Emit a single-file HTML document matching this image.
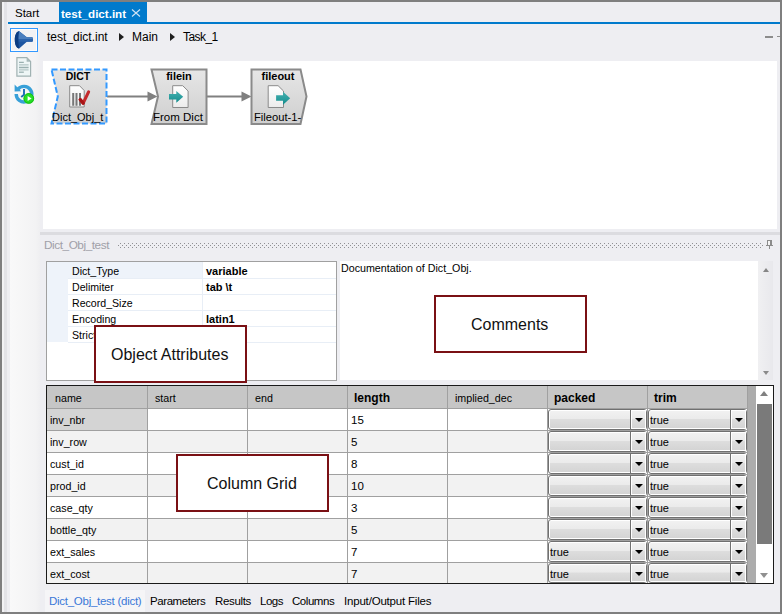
<!DOCTYPE html>
<html><head><meta charset="utf-8">
<style>
*{margin:0;padding:0;box-sizing:border-box}
html,body{width:782px;height:614px;overflow:hidden}
body{position:relative;background:#eeeef2;font-family:"Liberation Sans",sans-serif;font-size:12px;color:#000}
.a{position:absolute}
.t{position:absolute;white-space:pre;line-height:1}
.cb{position:absolute;border:1px solid #707070;border-radius:3px;box-shadow:inset 0 0 0 1px #fff;background:linear-gradient(to bottom,#f2f2f2 0%,#ebebeb 45%,#dddddd 50%,#d3d3d3 100%)}
.cbb{position:absolute;top:0;left:81px;bottom:0;width:16px;border-left:1px solid #707070;box-shadow:inset 0 0 0 1px #fff;background:linear-gradient(to bottom,#f2f2f2 0%,#ebebeb 45%,#dddddd 50%,#d3d3d3 100%)}
.tri{position:absolute;left:3.5px;top:8px;width:0;height:0;border-top:4.2px solid #000;border-left:4px solid transparent;border-right:4px solid transparent}
.ann{position:absolute;border:2px solid #7a1014;background:#fff}
.annt{position:absolute;white-space:pre;line-height:1;font-size:16px;color:#111}
</style></head><body>

<div class="a" style="left:0;top:0;width:782px;height:2px;background:#7f7f7f"></div>
<div class="a" style="left:0;top:0;width:2px;height:614px;background:#7f7f7f"></div>
<div class="a" style="left:780px;top:0;width:2px;height:614px;background:#7f7f7f"></div>
<div class="a" style="left:0;top:612px;width:782px;height:2px;background:#7f7f7f"></div>
<div class="a" style="left:2px;top:2px;width:2px;height:610px;background:#f2f2f4"></div>
<div class="a" style="left:4px;top:2px;width:3px;height:610px;background:#e3e3e7"></div>
<div class="t" style="left:15px;top:8px;font-size:11.5px">Start</div>
<div class="a" style="left:59px;top:2px;width:88px;height:22px;background:#007acc"></div>
<div class="t" style="left:61px;top:8px;font-size:11.6px;font-weight:bold;color:#fff">test_dict.int</div>
<svg class="a" style="left:131px;top:9px" width="10" height="8" viewBox="0 0 10 8"><path d="M1 0.5L9 7.5M9 0.5L1 7.5" stroke="#d0e4f5" stroke-width="1.1"/></svg>
<div class="a" style="left:8px;top:22px;width:772px;height:2px;background:#007acc"></div>
<div class="a" style="left:10px;top:24px;width:30px;height:588px;background:linear-gradient(to right,#f9f9f9,#f3f3f4 85%,#efeff1)"></div>
<div class="a" style="left:10px;top:28px;width:28px;height:24px;border:1px solid #3399ff;background:#f2f2f4;box-shadow:inset 0 0 0 1px #fcfcfc"></div>
<svg class="a" style="left:0;top:0" width="43" height="110" viewBox="0 0 43 110">
<defs><clipPath id="fc"><path d="M19.2,31.3 C16.3,31.3 14.8,35.5 14.8,39.8 C14.8,44.3 16.3,48.4 19.2,48.4 L26.8,41.8 L32.4,41.8 Q33.6,39.5 32.4,37.2 L26.8,37.2 Z"/></clipPath></defs>
<g clip-path="url(#fc)"><rect x="14" y="31" width="20" height="18" fill="#1d55a0"/><rect x="18" y="31" width="16" height="8.4" fill="#4a7fbf"/><rect x="18" y="39.4" width="16" height="2.4" fill="#2a62ab"/><path d="M14,31 H19.2 C18.2,35 18.2,45 19.2,49 H14Z" fill="#0b3c82"/></g>
<path d="M16.9,57.7 L26.8,57.7 L30.6,61.5 L30.6,76.1 L16.9,76.1 Z" fill="#eef6f6" stroke="#a0b2b2" stroke-width="1.2"/>
<path d="M26.6,57.8 L26.6,61.7 L30.5,61.7 Z" fill="#a8baba"/>
<g stroke-width="1.3"><path d="M19,62.4H23.8M19,67.5H28.6" stroke="#9ab0b0"/><path d="M19,64.9H28.6M19,69.8H28.6" stroke="#b4c6c6"/><path d="M19,72.2H23.8" stroke="#9ab0b0"/></g>
<path d="M16.2,94 A7.8,7.8 0 1 0 17.8,89.4" fill="none" stroke="#38a0d8" stroke-width="3.4"/>
<path d="M14.6,84.6 L14.6,91.6 L21.2,91.2 Z" fill="#38a0d8"/>
<path d="M24,89 L24,94.8 L21.2,97" fill="none" stroke="#1c6cb8" stroke-width="1.9"/>
<circle cx="28.8" cy="98.4" r="5.3" fill="#26e026"/>
<circle cx="28.8" cy="98.4" r="4.8" fill="none" stroke="#14b014" stroke-width="0.8"/>
<path d="M27.6,95.9 L31.6,98.5 L27.6,101.1 Z" fill="#fff"/>
</svg>
<div class="t" style="left:47px;top:31px;font-size:12px">test_dict.int</div>
<div class="a" style="left:119px;top:33px;width:0;height:0;border-left:5px solid #1e1e1e;border-top:4px solid transparent;border-bottom:4px solid transparent"></div>
<div class="t" style="left:132px;top:31px;font-size:12px">Main</div>
<div class="a" style="left:170px;top:33px;width:0;height:0;border-left:5px solid #1e1e1e;border-top:4px solid transparent;border-bottom:4px solid transparent"></div>
<div class="t" style="left:183px;top:31px;font-size:12px;letter-spacing:-0.55px">Task_1</div>
<div class="a" style="left:765px;top:36px;width:8px;height:2px;background:#8c8c8c"></div>
<div class="a" style="left:777px;top:36px;width:3px;height:1px;background:#8c8c8c"></div>
<div class="a" style="left:43px;top:61px;width:734px;height:168px;background:#fff"></div>
<svg class="a" style="left:0;top:0" width="782" height="230" viewBox="0 0 782 230">
<defs><linearGradient id="ng" x1="0" y1="0" x2="0" y2="1"><stop offset="0" stop-color="#e6e6e6"/><stop offset="1" stop-color="#cfcfcf"/></linearGradient>
<linearGradient id="pg" x1="0" y1="0" x2="0" y2="1"><stop offset="0" stop-color="#ffffff"/><stop offset="1" stop-color="#ececec"/></linearGradient>
<linearGradient id="tg" x1="0" y1="0" x2="0" y2="1"><stop offset="0" stop-color="#45aeae"/><stop offset="0.55" stop-color="#2a9e9e"/><stop offset="1" stop-color="#118a8a"/></linearGradient></defs>
<line x1="107" y1="96.5" x2="149" y2="96.5" stroke="#808080" stroke-width="2"/>
<path d="M147.5,91.5 L157.5,96.5 L147.5,101.5 Z" fill="#808080"/>
<line x1="207" y1="96.5" x2="243" y2="96.5" stroke="#808080" stroke-width="2"/>
<path d="M241.5,91.5 L251.5,96.5 L241.5,101.5 Z" fill="#808080"/>
<path d="M51.5,69.5 L106.5,69.5 L106.5,123.5 L51.5,123.5 L57.8,96.5 Z" fill="url(#ng)" stroke="#3399ff" stroke-width="2" stroke-dasharray="6,2.5"/>
<path d="M151.5,69.5 L206.5,69.5 L206.5,124 L151.5,124 L158,96.5 Z" fill="url(#ng)" stroke="#8a8a8a" stroke-width="2"/>
<path d="M251.5,69.5 L300.5,69.5 L306.5,96.5 L300.5,124 L251.5,124 Z" fill="url(#ng)" stroke="#8a8a8a" stroke-width="2"/>
<!-- dict icon -->
<path d="M69.7,85.7 L79.5,85.7 L84.2,90.5 L84.2,107 L69.7,107 Z" fill="url(#pg)" stroke="#8a8a8a" stroke-width="1"/>
<g stroke="#777" stroke-width="2"><path d="M73.2,93V105.7M76.5,93V105.7M80,93V105.7"/></g>
<path d="M80.2,99.6 L83.2,103.2 L88.6,91.8" fill="none" stroke="#c42a2c" stroke-width="3.1" stroke-linecap="round" stroke-linejoin="round"/><path d="M80.2,99.6 L83.2,103.2" fill="none" stroke="#a81416" stroke-width="3.1" stroke-linecap="round"/>
<!-- filein icon -->
<path d="M172.7,85.7 L182.7,85.7 L188.1,91 L188.1,107.5 L172.7,107.5 Z" fill="url(#pg)" stroke="#8a8a8a" stroke-width="1"/>
<path d="M169,94 L176.3,94 L176.3,91 L183.2,96.8 L176.3,102.7 L176.3,99.5 L169,99.5 Z" fill="url(#tg)"/>
<!-- fileout icon -->
<path d="M268.2,85.7 L278.1,85.7 L283.5,91 L283.5,107.5 L268.2,107.5 Z" fill="url(#pg)" stroke="#8a8a8a" stroke-width="1"/>
<path d="M276.1,95.3 L283,95.3 L283,91.8 L290.2,98.2 L283,104.8 L283,100.7 L276.1,100.7 Z" fill="url(#tg)"/>
</svg>
<div class="t" style="left:65px;top:71px;font-size:10.5px;font-weight:bold;width:26px;text-align:center">DICT</div>
<div class="t" style="left:52px;top:112px;font-size:11px">Dict_Obj_t</div>
<div class="t" style="left:160px;top:71px;font-size:11px;font-weight:bold;width:38px;text-align:center">filein</div>
<div class="t" style="left:153px;top:112px;font-size:11.5px">From Dict</div>
<div class="t" style="left:258px;top:71px;font-size:11px;font-weight:bold;width:40px;text-align:center">fileout</div>
<div class="t" style="left:254px;top:112px;font-size:11.2px">Fileout-1-</div>
<div class="a" style="left:40px;top:232px;width:740px;height:3px;background:#dcdce0"></div>
<div class="t" style="left:44px;top:240px;font-size:11.8px;letter-spacing:-0.45px;color:#a0a0a8">Dict_Obj_test</div>
<svg class="a" style="left:118px;top:243px" width="645" height="5"><defs><pattern id="dp" x="0" y="0" width="4" height="4" patternUnits="userSpaceOnUse"><rect x="2" y="0" width="1" height="1" fill="#909094"/><rect x="0" y="2" width="1" height="1" fill="#909094"/></pattern></defs><rect width="645" height="5" fill="url(#dp)"/></svg>
<svg class="a" style="left:766px;top:240px" width="7" height="9"><rect x="1" y="0" width="5" height="5" fill="#8c8c8c"/><rect x="2" y="1" width="2" height="4" fill="#f4f4f4"/><rect x="0" y="5" width="7" height="1" fill="#8c8c8c"/><rect x="3" y="6" width="1" height="3" fill="#8c8c8c"/></svg>
<div class="a" style="left:46px;top:261px;width:291px;height:120px;border:1px solid #a0a0a0;background:#fff"></div>
<div class="a" style="left:47px;top:262px;width:21px;height:80px;background:#eef3fa"></div>
<div class="a" style="left:68px;top:262px;width:134px;height:16px;background:#eef3fa"></div>
<div class="a" style="left:68px;top:278px;width:268px;height:1px;background:#e8eef6"></div>
<div class="t" style="left:72px;top:266px;font-size:10.6px">Dict_Type</div>
<div class="t" style="left:206px;top:266px;font-size:11px;font-weight:bold">variable</div>
<div class="a" style="left:68px;top:294px;width:268px;height:1px;background:#e8eef6"></div>
<div class="t" style="left:72px;top:282px;font-size:10.6px">Delimiter</div>
<div class="t" style="left:206px;top:282px;font-size:11px;font-weight:bold">tab \t</div>
<div class="a" style="left:68px;top:310px;width:268px;height:1px;background:#e8eef6"></div>
<div class="t" style="left:72px;top:298px;font-size:10.6px">Record_Size</div>
<div class="a" style="left:68px;top:326px;width:268px;height:1px;background:#e8eef6"></div>
<div class="t" style="left:72px;top:314px;font-size:10.6px">Encoding</div>
<div class="t" style="left:206px;top:314px;font-size:11px;font-weight:bold">latin1</div>
<div class="a" style="left:68px;top:342px;width:268px;height:1px;background:#e8eef6"></div>
<div class="t" style="left:72px;top:330px;font-size:10.6px">Strict</div>
<div class="a" style="left:202px;top:262px;width:1px;height:80px;background:#e8eef6"></div>
<div class="a" style="left:340px;top:261px;width:418px;height:119px;background:#fff"></div>
<div class="t" style="left:341px;top:263px;font-size:10.7px">Documentation of Dict_Obj.</div>
<div class="a" style="left:758px;top:261px;width:15px;height:119px;background:linear-gradient(to right,#f0f0f2,#e8e8ec)"></div>
<div class="a" style="left:763px;top:267.5px;width:0;height:0;border-bottom:4.5px solid #858585;border-left:3.6px solid transparent;border-right:3.6px solid transparent"></div>
<div class="a" style="left:763px;top:371px;width:0;height:0;border-top:4.5px solid #8a8a8a;border-left:3.6px solid transparent;border-right:3.6px solid transparent"></div>
<div class="a" style="left:46px;top:385px;width:728px;height:199px;border:1px solid #1a1a1a;background:#fff"></div>
<div class="a" style="left:47px;top:386px;width:700px;height:22px;background:#c6c6c6"></div>
<div class="a" style="left:747px;top:386px;width:9px;height:197px;background:#acacac"></div>
<div class="a" style="left:756px;top:386px;width:17px;height:197px;background:#fff"></div>
<div class="a" style="left:760px;top:391px;width:0;height:0;border-bottom:5px solid #808080;border-left:4.5px solid transparent;border-right:4.5px solid transparent"></div>
<div class="a" style="left:757px;top:404px;width:15px;height:140px;background:#7a7a7a"></div>
<div class="a" style="left:760px;top:573px;width:0;height:0;border-top:5px solid #909090;border-left:4.5px solid transparent;border-right:4.5px solid transparent"></div>
<div class="t" style="left:55px;top:393px;font-size:10.7px">name</div>
<div class="t" style="left:155px;top:393px;font-size:10.7px">start</div>
<div class="t" style="left:255px;top:393px;font-size:10.7px">end</div>
<div class="t" style="left:354px;top:392px;font-size:12px;font-weight:bold">length</div>
<div class="t" style="left:455px;top:393px;font-size:10.7px">implied_dec</div>
<div class="t" style="left:554px;top:392px;font-size:12px;font-weight:bold">packed</div>
<div class="t" style="left:654px;top:392px;font-size:12px;font-weight:bold">trim</div>
<div class="a" style="left:47px;top:409px;width:700px;height:21px;background:#ffffff"></div>
<div class="a" style="left:47px;top:409px;width:100px;height:21px;background:#d4d4d4"></div>
<div class="a" style="left:47px;top:408px;width:700px;height:1px;background:#a0a0a0"></div>
<div class="t" style="left:50px;top:415px;font-size:10.7px">inv_nbr</div>
<div class="t" style="left:351px;top:415px;font-size:11.5px">15</div>
<div class="cb" style="left:548px;top:409px;width:99px;height:21px"><div class="cbb"><div class="tri"></div></div></div>
<div class="cb" style="left:648px;top:409px;width:99px;height:21px"><div class="cbb"><div class="tri"></div></div></div>
<div class="t" style="left:650px;top:415px;font-size:11px">true</div>
<div class="a" style="left:47px;top:431px;width:700px;height:21px;background:#f2f2f2"></div>
<div class="a" style="left:47px;top:430px;width:700px;height:1px;background:#a0a0a0"></div>
<div class="t" style="left:50px;top:437px;font-size:10.7px">inv_row</div>
<div class="t" style="left:351px;top:437px;font-size:11.5px">5</div>
<div class="cb" style="left:548px;top:431px;width:99px;height:21px"><div class="cbb"><div class="tri"></div></div></div>
<div class="cb" style="left:648px;top:431px;width:99px;height:21px"><div class="cbb"><div class="tri"></div></div></div>
<div class="t" style="left:650px;top:437px;font-size:11px">true</div>
<div class="a" style="left:47px;top:453px;width:700px;height:21px;background:#ffffff"></div>
<div class="a" style="left:47px;top:452px;width:700px;height:1px;background:#a0a0a0"></div>
<div class="t" style="left:50px;top:459px;font-size:10.7px">cust_id</div>
<div class="t" style="left:351px;top:459px;font-size:11.5px">8</div>
<div class="cb" style="left:548px;top:453px;width:99px;height:21px"><div class="cbb"><div class="tri"></div></div></div>
<div class="cb" style="left:648px;top:453px;width:99px;height:21px"><div class="cbb"><div class="tri"></div></div></div>
<div class="t" style="left:650px;top:459px;font-size:11px">true</div>
<div class="a" style="left:47px;top:475px;width:700px;height:21px;background:#f2f2f2"></div>
<div class="a" style="left:47px;top:474px;width:700px;height:1px;background:#a0a0a0"></div>
<div class="t" style="left:50px;top:481px;font-size:10.7px">prod_id</div>
<div class="t" style="left:351px;top:481px;font-size:11.5px">10</div>
<div class="cb" style="left:548px;top:475px;width:99px;height:21px"><div class="cbb"><div class="tri"></div></div></div>
<div class="cb" style="left:648px;top:475px;width:99px;height:21px"><div class="cbb"><div class="tri"></div></div></div>
<div class="t" style="left:650px;top:481px;font-size:11px">true</div>
<div class="a" style="left:47px;top:497px;width:700px;height:21px;background:#ffffff"></div>
<div class="a" style="left:47px;top:496px;width:700px;height:1px;background:#a0a0a0"></div>
<div class="t" style="left:50px;top:503px;font-size:10.7px">case_qty</div>
<div class="t" style="left:351px;top:503px;font-size:11.5px">3</div>
<div class="cb" style="left:548px;top:497px;width:99px;height:21px"><div class="cbb"><div class="tri"></div></div></div>
<div class="cb" style="left:648px;top:497px;width:99px;height:21px"><div class="cbb"><div class="tri"></div></div></div>
<div class="t" style="left:650px;top:503px;font-size:11px">true</div>
<div class="a" style="left:47px;top:519px;width:700px;height:21px;background:#f2f2f2"></div>
<div class="a" style="left:47px;top:518px;width:700px;height:1px;background:#a0a0a0"></div>
<div class="t" style="left:50px;top:525px;font-size:10.7px">bottle_qty</div>
<div class="t" style="left:351px;top:525px;font-size:11.5px">5</div>
<div class="cb" style="left:548px;top:519px;width:99px;height:21px"><div class="cbb"><div class="tri"></div></div></div>
<div class="cb" style="left:648px;top:519px;width:99px;height:21px"><div class="cbb"><div class="tri"></div></div></div>
<div class="t" style="left:650px;top:525px;font-size:11px">true</div>
<div class="a" style="left:47px;top:541px;width:700px;height:21px;background:#ffffff"></div>
<div class="a" style="left:47px;top:540px;width:700px;height:1px;background:#a0a0a0"></div>
<div class="t" style="left:50px;top:547px;font-size:10.7px">ext_sales</div>
<div class="t" style="left:351px;top:547px;font-size:11.5px">7</div>
<div class="cb" style="left:548px;top:541px;width:99px;height:21px"><div class="cbb"><div class="tri"></div></div></div>
<div class="t" style="left:550px;top:547px;font-size:11px">true</div>
<div class="cb" style="left:648px;top:541px;width:99px;height:21px"><div class="cbb"><div class="tri"></div></div></div>
<div class="t" style="left:650px;top:547px;font-size:11px">true</div>
<div class="a" style="left:47px;top:563px;width:700px;height:20px;background:#f2f2f2"></div>
<div class="a" style="left:47px;top:562px;width:700px;height:1px;background:#a0a0a0"></div>
<div class="t" style="left:50px;top:569px;font-size:10.7px">ext_cost</div>
<div class="t" style="left:351px;top:569px;font-size:11.5px">7</div>
<div class="cb" style="left:548px;top:563px;width:99px;height:20px"><div class="cbb"><div class="tri"></div></div></div>
<div class="t" style="left:550px;top:569px;font-size:11px">true</div>
<div class="cb" style="left:648px;top:563px;width:99px;height:20px"><div class="cbb"><div class="tri"></div></div></div>
<div class="t" style="left:650px;top:569px;font-size:11px">true</div>
<div class="a" style="left:147px;top:386px;width:1px;height:197px;background:#a0a0a0"></div>
<div class="a" style="left:247px;top:386px;width:1px;height:197px;background:#a0a0a0"></div>
<div class="a" style="left:347px;top:386px;width:1px;height:197px;background:#a0a0a0"></div>
<div class="a" style="left:447px;top:386px;width:1px;height:197px;background:#a0a0a0"></div>
<div class="a" style="left:547px;top:386px;width:1px;height:197px;background:#a0a0a0"></div>
<div class="a" style="left:647px;top:386px;width:1px;height:197px;background:#a0a0a0"></div>
<div class="a" style="left:747px;top:386px;width:1px;height:197px;background:#a0a0a0"></div>
<div class="a" style="left:45px;top:590px;width:100px;height:22px;background:#f5f5f7"></div>
<div class="t" style="left:49px;top:596px;font-size:11.5px;letter-spacing:-0.27px;color:#3a78d8">Dict_Obj_test (dict)</div>
<div class="t" style="left:150px;top:596px;font-size:11.5px;letter-spacing:-0.42px">Parameters</div>
<div class="t" style="left:215px;top:596px;font-size:11.5px;letter-spacing:-0.33px">Results</div>
<div class="t" style="left:260px;top:596px;font-size:11.5px;letter-spacing:-0.5px">Logs</div>
<div class="t" style="left:292px;top:596px;font-size:11.5px;letter-spacing:-0.45px">Columns</div>
<div class="t" style="left:344px;top:596px;font-size:11.5px;letter-spacing:-0.19px">Input/Output Files</div>
<div class="ann" style="left:94px;top:325px;width:153px;height:58px"></div>
<div class="annt" style="left:111px;top:347px">Object Attributes</div>
<div class="ann" style="left:434px;top:295px;width:153px;height:58px"></div>
<div class="annt" style="left:471px;top:317px">Comments</div>
<div class="ann" style="left:176px;top:454px;width:153px;height:58px"></div>
<div class="annt" style="left:207px;top:476px">Column Grid</div>
</body></html>
